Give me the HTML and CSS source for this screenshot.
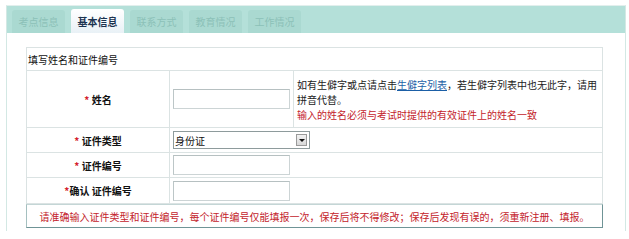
FILE: index.html
```html
<!DOCTYPE html>
<html>
<head>
  <meta charset="utf-8">
  <title>基本信息</title>
  <link rel="stylesheet" href="styles.css">
</head>
<body>
  <div class="regPanel">
    <div class="tabBar">
      <a class="tab">考点信息</a>
      <a class="tab on">基本信息</a>
      <a class="tab">联系方式</a>
      <a class="tab">教育情况</a>
      <a class="tab">工作情况</a>
    </div>
    <div class="panelBody">
      <table class="formTable">
        <tr class="captionRow">
          <td colspan="3">填写姓名和证件编号</td>
        </tr>
        <tr class="nameRow">
          <th><span class="req">*</span> 姓名</th>
          <td class="inputCell"><input type="text" class="textInput"></td>
          <td class="tip">
            如有生僻字或点请点击<a class="link">生僻字列表</a>，若生僻字列表中也无此字，请用<br>拼音代替。<br>
            <span class="warn">输入的姓名必须与考试时提供的有效证件上的姓名一致</span>
          </td>
        </tr>
        <tr class="fieldRow">
          <th><span class="req">*</span> 证件类型</th>
          <td colspan="2">
            <div class="selectBox">
              <select class="selectInner">
                <option>身份证</option>
              </select>
              <span class="selectArrow"></span>
            </div>
          </td>
        </tr>
        <tr class="fieldRow">
          <th><span class="req">*</span> 证件编号</th>
          <td colspan="2"><input type="text" class="textInput"></td>
        </tr>
        <tr class="fieldRow last">
          <th><span class="req">*</span>确认 证件编号</th>
          <td colspan="2"><input type="text" class="textInput"></td>
        </tr>
      </table>
      <div class="notice">请准确输入证件类型和证件编号，每个证件编号仅能填报一次，保存后将不得修改；保存后发现有误的，须重新注册、填报。</div>
    </div>
  </div>
</body>
</html>
```

FILE: styles.css
```css
* {
  box-sizing: border-box;
}
body {
  margin: 0;
  background: #fff;
  font-family: "Noto Sans CJK SC", "Liberation Sans", sans-serif;
  font-size: 10px;
  color: #222;
}
.regPanel {
  margin: 5px 0 0 6px;
  width: 620px;
  height: 226px;
  border-left: 1px solid #d3e8e4;
  border-right: 1px solid #d3e8e4;
  border-top: 1px solid #e2efed;
}
.tabBar {
  display: flex;
  align-items: flex-end;
  gap: 6px;
  height: 27px;
  padding-left: 5px;
  background-color: #b4e0d9;
}
.tab {
  display: flex;
  align-items: center;
  justify-content: center;
  width: 53px;
  height: 23px;
  border-radius: 3px 3px 0 0;
  background-color: #aad9d1;
  color: #8cc1b8;
  cursor: pointer;
}
.tab.on {
  height: 24px;
  background: linear-gradient(#ffffff, #e9f1f6);
  color: #1c3350;
  font-weight: bold;
}
.panelBody {
  padding: 14px 0 0 19px;
}
.formTable {
  width: 577px;
  border-collapse: collapse;
  border: 1px solid #d6dddd;
}
.formTable td,
.formTable th {
  border: 1px solid #dbe3e3;
  padding: 0;
  line-height: 15px;
}
.captionRow td {
  height: 23px;
  padding-left: 1px;
  color: #111;
}
.formTable th {
  width: 143px;
  font-weight: bold;
  color: #111;
  text-align: center;
}
.req {
  color: #d4202c;
  font-weight: bold;
}
.inputCell {
  width: 124px;
  padding-left: 3px !important;
}
.nameRow td,
.nameRow th {
  height: 57px;
}
.fieldRow td,
.fieldRow th {
  height: 25px;
}
.fieldRow.last td,
.fieldRow.last th {
  height: 26px;
}
.fieldRow td {
  padding-left: 3px;
}
.textInput {
  display: block;
  width: 117px;
  height: 20px;
  border: 1px solid #ccd4d5;
  border-top-color: #b6c0c1;
  border-left-color: #bcc6c7;
  background: #fff;
  outline: none;
}
.tip {
  padding: 0 3px !important;
  color: #222;
}
.link {
  color: #1b5fa6;
  text-decoration: underline;
  cursor: pointer;
}
.warn {
  color: #c3232b;
}
.selectBox {
  display: flex;
  align-items: center;
  width: 137px;
  height: 18px;
  border: 1px solid #8e9b9c;
  background: #fff;
  padding-right: 2px;
}
.selectInner {
  flex-grow: 1;
  appearance: none;
  border: none;
  outline: none;
  background: transparent;
  font-family: inherit;
  font-size: 10px;
  color: #111;
  padding: 0 1px;
  height: 16px;
}
.selectArrow {
  display: flex;
  align-items: center;
  justify-content: center;
  width: 11px;
  height: 12px;
  border: 1px solid #9a9a9a;
  background: linear-gradient(#f2f2f2, #d8d8d8);
}
.selectArrow::before {
  content: '';
  border: 3px solid transparent;
  border-top: 3px solid #111;
  border-bottom: 0;
  margin-top: 1px;
}
.notice {
  width: 577px;
  height: 24px;
  display: flex;
  align-items: center;
  justify-content: center;
  border: 1px solid #a5c0c0;
  border-top-color: #c4d6d6;
  border-right-color: #6f9496;
  border-bottom-color: #6f9496;
  color: #c3232b;
}
```
